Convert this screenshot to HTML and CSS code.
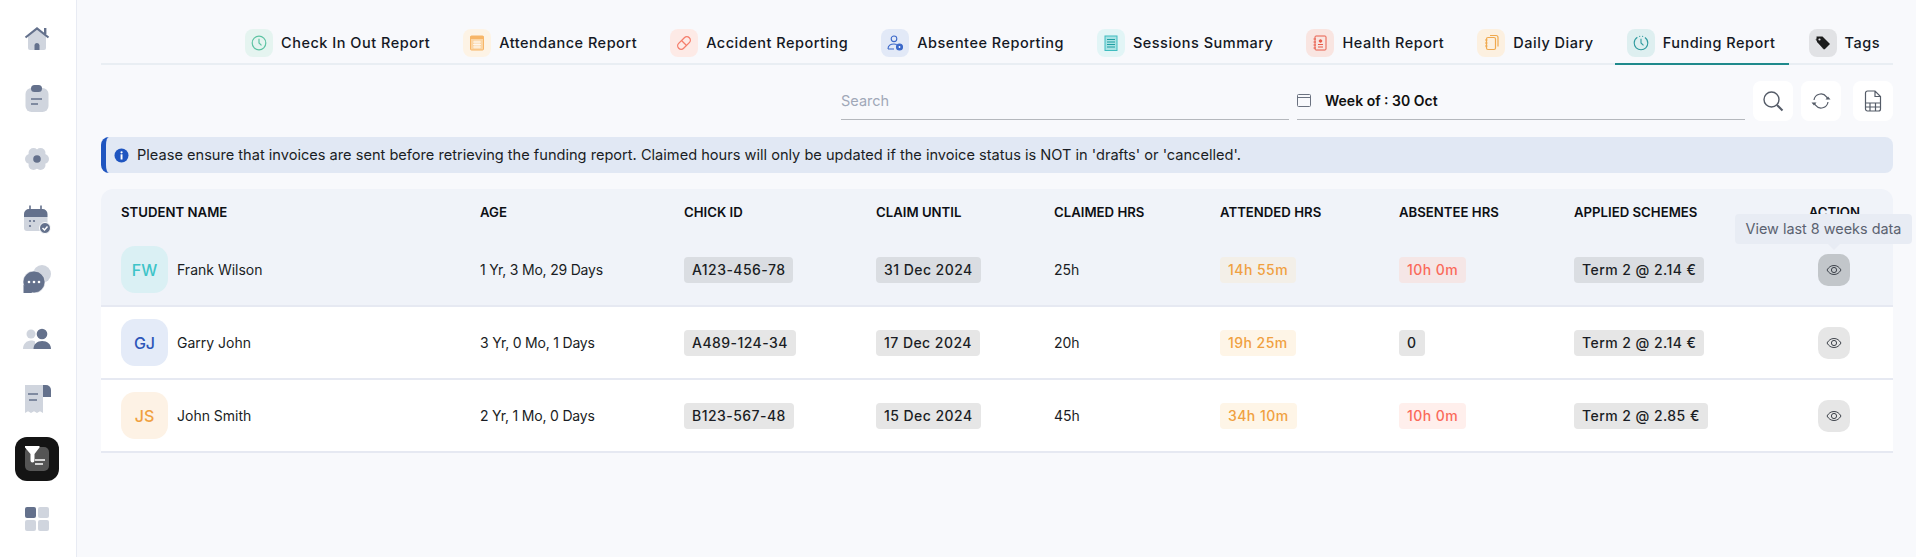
FILE: index.html
```html
<!DOCTYPE html>
<html lang="en">
<head>
    <meta charset="UTF-8">
    <meta name="viewport" content="width=device-width, initial-scale=1.0">
    <title>Funding Report</title>
    <link rel="stylesheet" href="styles.css">
</head>
<body>
    <div class="app">
        <nav class="sidebar">
            <a class="side-item">
                <svg width="36" height="36" viewBox="0 0 36 36"><path d="M9 15 18 8l9 7v12a2 2 0 0 1-2 2H11a2 2 0 0 1-2-2z" fill="#d0d5de"/><path d="M6.500 16.500 18 7.500l11.500 9" fill="none" stroke="#64718c" stroke-width="2.200"/><path d="M25 7h2.400v6H25z" fill="#64718c"/><path d="M15.500 29v-4.500a2.500 2.500 0 0 1 5 0V29z" fill="#64718c"/></svg>
            </a>
            <a class="side-item">
                <svg width="36" height="36" viewBox="0 0 36 36"><rect x="6.500" y="7" width="23" height="24" rx="6" fill="#d0d5de"/><rect x="12" y="4" width="11" height="7" rx="3.500" fill="#64718c"/><path d="M12 18h11M12 23h7" stroke="#64718c" stroke-width="1.600"/></svg>
            </a>
            <a class="side-item">
                <svg width="36" height="36" viewBox="0 0 36 36"><g fill="#d0d5de"><circle cx="25" cy="18" r="5"/><circle cx="11" cy="18" r="5"/><circle cx="21.500" cy="12" r="5"/><circle cx="14.500" cy="12" r="5"/><circle cx="21.500" cy="24" r="5"/><circle cx="14.500" cy="24" r="5"/></g><circle cx="18" cy="18" r="3.800" fill="#64718c"/></svg>
            </a>
            <a class="side-item">
                <svg width="36" height="36" viewBox="0 0 36 36"><path d="M5 16h23.500v14H8a3 3 0 0 1-3-3z" fill="#d0d5de"/><path d="M5 16v-3a5 5 0 0 1 5-5h13.500a5 5 0 0 1 5 5v3z" fill="#64718c"/><path d="M11 4.500v5M22 4.500v5" stroke="#64718c" stroke-width="1.600"/><g fill="#64718c"><circle cx="11" cy="20" r="1.100"/><circle cx="15" cy="20" r="1.100"/><circle cx="11" cy="25" r="1.100"/></g><circle cx="26" cy="27" r="5.500" fill="#64718c" stroke="#fff" stroke-width="1"/><path d="m23.500 27 2 2 3-3.500" fill="none" stroke="#fff" stroke-width="1.500"/></svg>
            </a>
            <a class="side-item">
                <svg width="36" height="36" viewBox="0 0 36 36"><circle cx="23" cy="13" r="9" fill="#d0d5de"/><circle cx="15" cy="21" r="11" fill="#64718c" stroke="#fff" stroke-width=".6"/><path d="M4.500 24v8h9z" fill="#64718c"/><g fill="#fff"><circle cx="10" cy="21" r="1.300"/><circle cx="15" cy="21" r="1.300"/><circle cx="20" cy="21" r="1.300"/></g></svg>
            </a>
            <a class="side-item">
                <svg width="36" height="36" viewBox="0 0 36 36"><circle cx="12" cy="13" r="4.500" fill="#d0d5de"/><path d="M4 28c0-5 3.500-8.500 8-8.500 1.500 0 3 .4 4 1v7.500z" fill="#d0d5de"/><circle cx="23" cy="13" r="5.300" fill="#64718c"/><path d="M14.500 28c0-5 3.600-8 8.700-8s8.800 3 8.800 8z" fill="#64718c"/></svg>
            </a>
            <a class="side-item">
                <svg width="36" height="36" viewBox="0 0 36 36"><path d="M6 4h18v28l-3-1.800-3 1.800-3-1.800-3 1.800-3-1.800-3 1.800z" fill="#d0d5de"/><path d="M24 4h3a5 5 0 0 1 5 5v7h-8z" fill="#64718c"/><path d="M9 13h10M10 19h8" stroke="#64718c" stroke-width="1.600"/></svg>
            </a>
            <a class="side-item active">
                <svg width="44" height="44" viewBox="0 0 44 44"><rect x="10" y="10" width="24" height="24" rx="5" fill="#555"/><path d="M10 9h14.500v1.500L19.500 17v6.500a2 2 0 0 1-4 0V17L10 10.500z" fill="#fff"/><path d="M20 23h10M20 27h8" stroke="#fff" stroke-width="1.300"/></svg>
            </a>
            <a class="side-item">
                <svg width="36" height="36" viewBox="0 0 36 36"><rect x="6" y="6" width="11" height="11" rx="2" fill="#64718c"/><rect x="19" y="6" width="11" height="11" rx="2" fill="#d0d5de"/><rect x="6" y="19" width="11" height="11" rx="2" fill="#d0d5de"/><rect x="19" y="19" width="11" height="11" rx="2" fill="#d0d5de"/></svg>
            </a>
        </nav>

        <main class="content">
            <div class="tabs">
                <a class="tab">
                    <span class="tab-icon tint-green"><svg width="18" height="18" viewBox="0 0 18 18" fill="none" stroke="currentColor" stroke-width="1.200"><circle cx="9" cy="9" r="6.800"/><path d="M9 4.800V9l2.500 2.400"/></svg></span>
                    Check In Out Report
                </a>
                <a class="tab">
                    <span class="tab-icon tint-orange"><svg width="18" height="18" viewBox="0 0 18 18"><rect x="2.500" y="2" width="13" height="14" rx="1" fill="#fbd5a4" stroke="currentColor" stroke-width="1"/><rect x="2.500" y="2" width="13" height="3" fill="currentColor"/><path d="M5 8h8M5 10.500h8M5 13h8M7 6.500v8M9 6.500v8M11 6.500v8" stroke="#fff" stroke-width=".7"/></svg></span>
                    Attendance Report
                </a>
                <a class="tab">
                    <span class="tab-icon tint-red"><svg width="18" height="18" viewBox="0 0 18 18" fill="none" stroke="currentColor" stroke-width="1.300"><rect x="1.500" y="5.500" width="15" height="7" rx="3.500" transform="rotate(-45 9 9)"/><path d="m6.500 6.500 5 5M8 9h.01M10 8h.01"/></svg></span>
                    Accident Reporting
                </a>
                <a class="tab">
                    <span class="tab-icon tint-blue"><svg width="18" height="18" viewBox="0 0 18 18" fill="none" stroke="currentColor" stroke-width="1.100"><circle cx="8" cy="4.800" r="2.800"/><path d="M2 15c0-3.500 2.500-5 6-5 1 0 2 .1 2.800.5M2 15h6"/><circle cx="13.500" cy="13" r="3" fill="currentColor"/><circle cx="13.500" cy="13" r=".9" fill="#fff" stroke="none"/></svg></span>
                    Absentee Reporting
                </a>
                <a class="tab">
                    <span class="tab-icon tint-cyan"><svg width="18" height="18" viewBox="0 0 18 18"><rect x="3" y="2" width="12" height="14.500" fill="#a9e3e4" stroke="currentColor" stroke-width="1"/><path d="M5 5.500h8M5 8h8M5 10.500h8M5 13h8" stroke="#1e9ea2" stroke-width="1"/></svg></span>
                    Sessions Summary
                </a>
                <a class="tab">
                    <span class="tab-icon tint-rose"><svg width="18" height="18" viewBox="0 0 18 18" fill="none" stroke="currentColor" stroke-width="1"><rect x="4" y="2" width="11" height="14" rx="1"/><path d="M2.500 5h2.500M2.500 8h2.500M2.500 11h2.500M2.500 14h2.500"/><circle cx="9.500" cy="7" r="1.300" fill="currentColor"/><path d="M7 10.500h5M7 13h5" stroke-width="1.200"/></svg></span>
                    Health Report
                </a>
                <a class="tab">
                    <span class="tab-icon tint-amber"><svg width="18" height="18" viewBox="0 0 18 18" fill="none" stroke="currentColor" stroke-width="1.200"><rect x="4.500" y="3.500" width="9" height="12" rx="1.500"/><path d="M8 1.500h6a2 2 0 0 1 2 2v9M3 6h2.500M3 9h2.500M3 12h2.500"/></svg></span>
                    Daily Diary
                </a>
                <a class="tab selected">
                    <span class="tab-icon tint-teal"><svg width="18" height="18" viewBox="0 0 18 18" fill="none" stroke="currentColor" stroke-width="1.100"><circle cx="9" cy="9" r="6.800" stroke-dasharray="28 2 1 2 1 2"/><path d="M9 4.800V9l2.500 2.400"/></svg></span>
                    Funding Report
                </a>
                <a class="tab">
                    <span class="tab-icon tint-gray"><svg width="18" height="18" viewBox="0 0 18 18"><path d="M1.500 5.500 3 4l9 9-2.500 2.500z" fill="#555"/><path d="M2.500 2.500h6l7.500 7.500-5.500 5.500L3 8z" fill="currentColor"/><circle cx="5.500" cy="5.500" r="1.100" fill="#e1e2e5"/></svg></span>
                    Tags
                </a>
            </div>

            <div class="toolbar">
                <input class="field search-field" type="text" placeholder="Search">
                <div class="field week-field">
                    <svg width="14" height="14" viewBox="0 0 14 14" fill="none" stroke="#6b7280" stroke-width="1"><rect x=".5" y="1.500" width="13" height="12" rx="1"/><path d="M.5 4.500h13"/></svg>
                    <span>Week of : 30 Oct</span>
                </div>
                <button class="tool-btn">
                    <svg width="22" height="22" viewBox="0 0 22 22" fill="none" stroke="#555c68" stroke-width="1.400"><circle cx="9.500" cy="9.500" r="7.500"/><path d="m15 15 5.500 5.500" stroke-width="2"/></svg>
                </button>
                <button class="tool-btn">
                    <svg width="20" height="20" viewBox="0 0 20 20" fill="none" stroke="#555c68" stroke-width="1.200"><path d="M3 9a7 7 0 0 1 12.500-3.200L17 8M17 11a7 7 0 0 1-12.500 3.200L3 12"/><path d="M14.500 8.500h5l-2.500-3zM.5 11.500h5l-2.500 3z" fill="#555c68" stroke="none"/></svg>
                </button>
                <button class="tool-btn last">
                    <svg width="18" height="22" viewBox="0 0 18 22" fill="none" stroke="#555c68" stroke-width="1.200"><path d="M1.500 3a2 2 0 0 1 2-2H11l5.500 5.500V19a2 2 0 0 1-2 2h-11a2 2 0 0 1-2-2zM11 1v5.500h5.500"/><path d="M1.500 13h15M1.500 17h15M6 13v8M11.500 13v8"/></svg>
                </button>
            </div>

            <div class="alert">
                <svg width="15" height="15" viewBox="0 0 15 15"><circle cx="7.500" cy="7.500" r="7" fill="#1f55c0"/><rect x="6.600" y="6.300" width="1.900" height="5.200" fill="#fff"/><circle cx="7.550" cy="4.300" r="1.100" fill="#fff"/></svg>
                <span>Please ensure that invoices are sent before retrieving the funding report. Claimed hours will only be updated if the invoice status is NOT in 'drafts' or 'cancelled'.</span>
            </div>

            <table class="report">
                <colgroup>
                    <col class="c-name"><col class="c-age"><col class="c-id"><col class="c-until"><col class="c-claimed"><col class="c-attended"><col class="c-absent"><col class="c-schemes"><col>
                </colgroup>
                <thead>
                    <tr>
                        <th>Student Name</th>
                        <th>Age</th>
                        <th>Chick ID</th>
                        <th>Claim Until</th>
                        <th>Claimed Hrs</th>
                        <th>Attended Hrs</th>
                        <th>Absentee Hrs</th>
                        <th>Applied Schemes</th>
                        <th class="action-cell">Action</th>
                    </tr>
                </thead>
                <tbody>
                    <tr class="hovered">
                        <td><div class="student"><span class="avatar av-teal">FW</span>Frank Wilson</div></td>
                        <td class="age">1 Yr, 3 Mo, 29 Days</td>
                        <td><span class="pill">A123-456-78</span></td>
                        <td><span class="pill">31 Dec 2024</span></td>
                        <td>25h</td>
                        <td><span class="pill attended">14h 55m</span></td>
                        <td><span class="pill absent">10h 0m</span></td>
                        <td><span class="pill">Term 2 @ 2.14 €</span></td>
                        <td class="action-cell">
                            <span class="action-wrap">
                                <span class="tooltip">View last 8 weeks data</span>
                                <button class="eye-btn"><svg width="16" height="12" viewBox="0 0 16 12" fill="none" stroke="#3f444c" stroke-width="1"><path d="M1 6c1.800-3 4-4.500 7-4.500S13.200 3 15 6c-1.800 3-4 4.500-7 4.500S2.800 9 1 6z"/><circle cx="8" cy="6" r="2.600"/></svg></button>
                            </span>
                        </td>
                    </tr>
                    <tr>
                        <td><div class="student"><span class="avatar av-blue">GJ</span>Garry John</div></td>
                        <td class="age">3 Yr, 0 Mo, 1 Days</td>
                        <td><span class="pill">A489-124-34</span></td>
                        <td><span class="pill">17 Dec 2024</span></td>
                        <td>20h</td>
                        <td><span class="pill attended">19h 25m</span></td>
                        <td><span class="pill">0</span></td>
                        <td><span class="pill">Term 2 @ 2.14 €</span></td>
                        <td class="action-cell">
                            <span class="action-wrap">
                                <button class="eye-btn"><svg width="16" height="12" viewBox="0 0 16 12" fill="none" stroke="#3f444c" stroke-width="1"><path d="M1 6c1.800-3 4-4.500 7-4.500S13.200 3 15 6c-1.800 3-4 4.500-7 4.500S2.800 9 1 6z"/><circle cx="8" cy="6" r="2.600"/></svg></button>
                            </span>
                        </td>
                    </tr>
                    <tr>
                        <td><div class="student"><span class="avatar av-orange">JS</span>John Smith</div></td>
                        <td class="age">2 Yr, 1 Mo, 0 Days</td>
                        <td><span class="pill">B123-567-48</span></td>
                        <td><span class="pill">15 Dec 2024</span></td>
                        <td>45h</td>
                        <td><span class="pill attended">34h 10m</span></td>
                        <td><span class="pill absent">10h 0m</span></td>
                        <td><span class="pill">Term 2 @ 2.85 €</span></td>
                        <td class="action-cell">
                            <span class="action-wrap">
                                <button class="eye-btn"><svg width="16" height="12" viewBox="0 0 16 12" fill="none" stroke="#3f444c" stroke-width="1"><path d="M1 6c1.800-3 4-4.500 7-4.500S13.200 3 15 6c-1.800 3-4 4.500-7 4.500S2.800 9 1 6z"/><circle cx="8" cy="6" r="2.600"/></svg></button>
                            </span>
                        </td>
                    </tr>
                </tbody>
            </table>
        </main>
    </div>
</body>
</html>
```

FILE: styles.css
```css
* {
    box-sizing: border-box;
}

body {
    margin: 0;
    height: 557px;
    overflow: hidden;
    font-family: Inter, "Open Sans", sans-serif;
    font-size: 14px;
    color: #1a1d24;
    background-color: #f8f9fc;
}

.app {
    display: flex;
    height: 557px;
}

.sidebar {
    flex: 0 0 77px;
    display: flex;
    flex-direction: column;
    align-items: center;
    gap: 16px;
    padding: 17px 2px 0 0;
    background-color: #fff;
    border-right: 1px solid #e8ebf3;
}

.side-item {
    display: flex;
    align-items: center;
    justify-content: center;
    flex: 0 0 44px;
    width: 44px;
    border-radius: 12px;
}

.side-item.active {
    background-color: #141414;
}

.content {
    flex: 1;
    min-width: 0;
    padding: 0 23px 0 24px;
}

/* tabs */
.tabs {
    display: flex;
    justify-content: flex-end;
    gap: 8px;
    height: 65px;
    padding-top: 29px;
    border-bottom: 2px solid #e9eef3;
}

.tab {
    display: flex;
    align-items: flex-start;
    gap: 8px;
    height: 36px;
    padding: 0 13px 0 12px;
    font-size: 14.500px;
    font-weight: 500;
    line-height: 28px;
    letter-spacing: .5px;
    color: #141824;
}

.tab.selected {
    border-bottom: 2px solid #1f8a8c;
}

.tab-icon {
    display: flex;
    align-items: center;
    justify-content: center;
    width: 28px;
    height: 28px;
    border-radius: 8px;
}

.tint-green { background-color: #e5f4f0; color: #5dc3a3; }
.tint-orange { background-color: #fdf3e5; color: #f7b567; }
.tint-red { background-color: #fdeae6; color: #f57e6c; }
.tint-blue { background-color: #e2e9f7; color: #3b68c9; }
.tint-cyan { background-color: #e2f5f6; color: #3fbcbf; }
.tint-rose { background-color: #f9e5e1; color: #e85c4a; }
.tint-amber { background-color: #fcf0e0; color: #f0a94e; }
.tint-teal { background-color: #deeff0; color: #2f9a9e; }
.tint-gray { background-color: #e1e2e5; color: #1c1c1c; }

/* toolbar */
.toolbar {
    display: flex;
    align-items: flex-start;
    justify-content: flex-end;
    gap: 8px;
    margin-top: 16px;
}

.field {
    width: 448px;
    height: 39px;
    border: 0;
    border-bottom: 1px solid #b5b8bd;
    background: transparent;
    font-family: inherit;
    font-size: 14.500px;
    padding: 0;
    outline: none;
}

.field::placeholder {
    color: #a0a8b8;
}

.week-field {
    display: flex;
    align-items: center;
    gap: 14px;
    font-size: 14px;
    font-weight: 600;
    color: #111;
}

.tool-btn {
    display: flex;
    align-items: center;
    justify-content: center;
    width: 40px;
    height: 40px;
    padding: 0;
    border: 0;
    border-radius: 8px;
    background-color: #fff;
}

.tool-btn.last {
    margin-left: 4px;
}

/* alert */
.alert {
    display: flex;
    align-items: center;
    gap: 8px;
    height: 36px;
    margin-top: 16px;
    padding-left: 8px;
    background-color: #e1e8f4;
    border-left: 5px solid #1f55c0;
    border-radius: 8px;
    font-size: 14.600px;
}

/* table */
.report {
    width: 100%;
    margin-top: 16px;
    table-layout: fixed;
    border-collapse: separate;
    border-spacing: 0;
}

.c-name { width: 359px; }
.c-age { width: 204px; }
.c-id { width: 192px; }
.c-until { width: 178px; }
.c-claimed { width: 166px; }
.c-attended { width: 179px; }
.c-absent { width: 175px; }
.c-schemes { width: 189px; }

.report th {
    height: 45px;
    padding: 0 20px;
    text-align: left;
    font-size: 13.200px;
    font-weight: 600;
    text-transform: uppercase;
    color: #0d0f14;
    background-color: #f0f3f9;
}

.report th:first-child {
    border-top-left-radius: 12px;
}

.report th:last-child {
    border-top-right-radius: 12px;
}

.report td {
    height: 73px;
    padding: 0 20px;
    background-color: #fff;
    border-bottom: 2px solid #e6e9f2;
}

.report .hovered td {
    background-color: #f0f3f9;
}

.report td.age {
    letter-spacing: -.2px;
}

.report th.action-cell,
.report td.action-cell {
    padding-right: 33px;
    text-align: right;
}

.student {
    display: flex;
    align-items: center;
    gap: 9px;
}

.avatar {
    display: flex;
    align-items: center;
    justify-content: center;
    width: 47px;
    height: 47px;
    border-radius: 14px;
    font-size: 16px;
    font-weight: 500;
}

.av-teal { background-color: #daf0f4; color: #3ec4c8; }
.av-blue { background-color: #e4ebf8; color: #2d56b8; }
.av-orange { background-color: #fdf2e5; color: #f0a040; }

.pill {
    display: inline-block;
    height: 26px;
    padding: 0 8px;
    border-radius: 4px;
    line-height: 26px;
    font-weight: 500;
    letter-spacing: .45px;
    background-color: #e6e6e6;
}

.hovered .pill {
    background-color: #dadde2;
}

.pill.attended {
    color: #f0a040;
    background-color: #fef5e7;
}

.hovered .pill.attended {
    background-color: #f3efe8;
}

.pill.absent {
    color: #fa6a5a;
    background-color: #ffefec;
}

.hovered .pill.absent {
    background-color: #f5e6e6;
}

.action-wrap {
    position: relative;
    display: inline-block;
    margin-right: 10px;
    vertical-align: middle;
}

.eye-btn {
    display: flex;
    align-items: center;
    justify-content: center;
    width: 32px;
    height: 32px;
    padding: 0;
    border: 0;
    border-radius: 10px;
    background-color: #e6e6e6;
}

.hovered .eye-btn {
    background-color: #c2c6ca;
}

.tooltip {
    position: absolute;
    right: -62px;
    bottom: 42px;
    width: 177px;
    height: 30px;
    border-radius: 4px;
    font-size: 14.400px;
    line-height: 30px;
    text-align: center;
    white-space: nowrap;
    color: #5b6270;
    background-color: #e8ecf4;
}

.tooltip::after {
    content: "";
    position: absolute;
    top: 100%;
    right: 72px;
    border: 6px solid transparent;
    border-top-color: #e8ecf4;
}
```
